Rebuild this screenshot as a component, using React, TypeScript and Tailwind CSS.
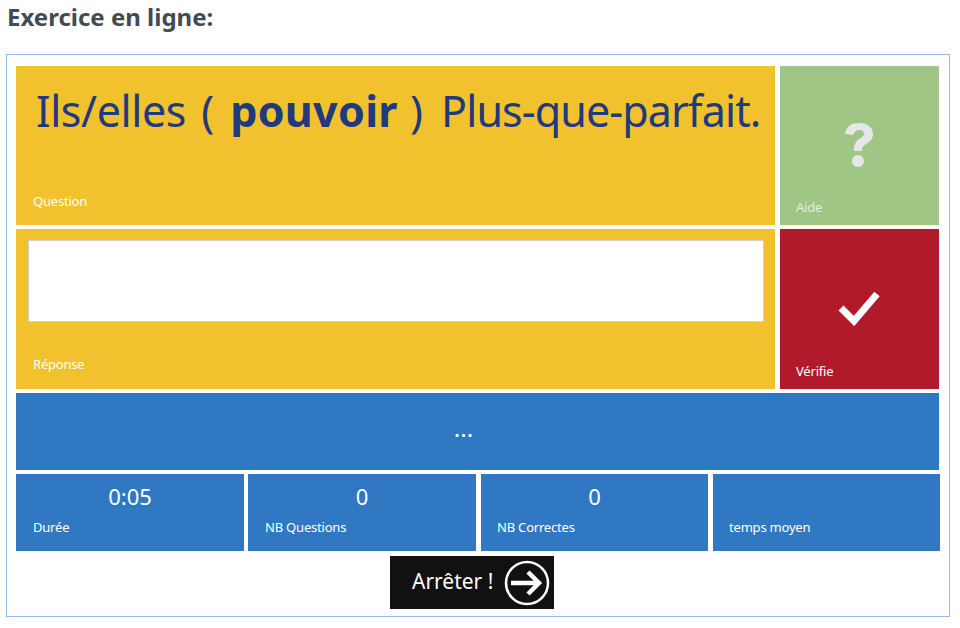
import { ReactNode } from 'react';

const fontStack = "font-['Noto_Sans','Open_Sans',sans-serif]";

function Label({ children, className = '' }: { children: ReactNode; className?: string }) {
  return <span className={`text-[13px] leading-[18px] tracking-[-0.2px] text-white ${className}`}>{children}</span>;
}

function StatTile({ value, label, className }: { value?: string; label: string; className: string }) {
  return (
    <div className={`flex h-[77px] flex-col bg-[#3078c1] ${className}`}>
      <div className="flex h-[44px] items-center justify-center text-[22px] leading-none text-white">{value}</div>
      <Label>{label}</Label>
    </div>
  );
}

export default function App() {
  return (
    <div className={`h-[628px] w-[960px] overflow-hidden bg-white ${fontStack}`}>
      <h2 className="pl-[7px] pt-[2px] text-[24px] font-bold leading-[30px] text-[#424b52]">Exercice en ligne:</h2>
      <div className="ml-[6px] mt-[22px] h-[563px] w-[944px] border border-[#94bceb] pl-[9px] pt-[11px]">
        <div className="grid w-[923px] grid-cols-[759px_159px] gap-x-[5px] gap-y-[4px]">
          <div className="flex h-[159px] flex-col justify-between bg-[#f2c12e] pb-[15px] pl-[17px]">
            <p className="whitespace-nowrap pl-[3px] pt-[17px] text-[43px] leading-[56px] text-[#20397f]">
              <span className="tracking-[-0.4px]">Ils/elles</span>
              <span className="ml-[4px]"> ( </span>
              <b className="ml-[5px] mr-[1px] tracking-[0.3px]">pouvoir</b>
              <span> ) </span>
              <span className="ml-[7px] tracking-[-0.9px]">Plus-que-parfait.</span>
            </p>
            <Label>Question</Label>
          </div>
          <div className="flex h-[159px] flex-col bg-[#a0c686] pb-[9px] pl-[16px]">
            <div className="flex flex-1 items-center justify-center pt-[26px]">
              <svg viewBox="0 0 30 46" className="mr-[17px] h-[46px] w-[30px]" fill="#e6e6e6">
                <path d="M1 12C2 4 8 1 15 1c8 0 14 4 14 11 0 5-3 8-7 10-3 2-4 3-4 7H10c0-6 1-9 5-12 3-2 5-3 5-5 0-3-2-4-5-4-3 0-5 2-6 5Z" />
                <circle cx="14" cy="39" r="6" />
              </svg>
            </div>
            <Label className="opacity-70">Aide</Label>
          </div>

          <div className="flex h-[160px] flex-col justify-between bg-[#f2c12e] pb-[16px] pl-[12px] pr-[11px] pt-[11px]">
            <input className="h-[82px] w-full border border-[#d0d0d0] bg-white" aria-label="Réponse" />
            <Label className="pl-[5px]">Réponse</Label>
          </div>
          <div className="flex h-[160px] flex-col bg-[#b11a2b] pb-[9px] pl-[16px]">
            <div className="flex flex-1 items-center justify-center pt-[24px]">
              <svg viewBox="0 0 42 36" className="mr-[17px] h-[36px] w-[42px]" fill="none" stroke="#ffffff" strokeWidth="7">
                <path d="M3 18 L16 31 L39 4" />
              </svg>
            </div>
            <Label>Vérifie</Label>
          </div>

          <div className="col-span-2 flex h-[77px] items-center justify-center bg-[#3078c1] pb-[8px] pr-[28px] text-[24px] text-white">...</div>

          <div className="col-span-2 flex w-[924px]">
            <StatTile value="0:05" label="Durée" className="w-[228px] px-[17px]" />
            <StatTile value="0" label="NB Questions" className="ml-[4px] w-[228px] px-[17px]" />
            <StatTile value="0" label="NB Correctes" className="ml-[5px] w-[227px] px-[16px]" />
            <StatTile label="temps moyen" className="ml-[5px] w-[227px] px-[16px]" />
          </div>
        </div>

        <div className="ml-[374px] mt-[5px] flex h-[53px] w-[164px] items-center bg-[#111111] pl-[22px] text-white">
          <span className="pb-[2px] text-[21px] leading-none">Arrêter !</span>
          <svg viewBox="0 0 46 46" className="ml-[11px] h-[46px] w-[46px]" fill="none" stroke="#ffffff">
            <circle cx="23" cy="23" r="21" strokeWidth="2.5" />
            <path d="M7 23 H35 M24 12 L35 23 L24 34" strokeWidth="4.5" />
          </svg>
        </div>
      </div>
    </div>
  );
}
